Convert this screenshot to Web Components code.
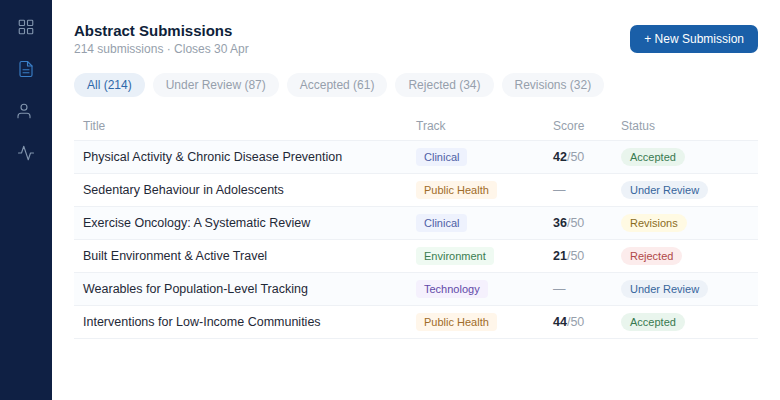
<!DOCTYPE html>
<html>
<head>
<meta charset="utf-8">
<title>Abstract Submissions</title>
<style>
html,body{margin:0;height:100%;background:#fff;}
body{font-family:"Liberation Sans",Arial,sans-serif;}
</style>
</head>
<body>
<app-shell>
  <side-nav slot="nav"></side-nav>
  <page-head title-text="Abstract Submissions" sub-text="214 submissions · Closes 30 Apr" action="+ New Submission"></page-head>
  <filter-tabs>
    <tab-pill active>All (214)</tab-pill>
    <tab-pill>Under Review (87)</tab-pill>
    <tab-pill>Accepted (61)</tab-pill>
    <tab-pill>Rejected (34)</tab-pill>
    <tab-pill>Revisions (32)</tab-pill>
  </filter-tabs>
  <sub-table>
    <sub-row head><span>Title</span><span>Track</span><span>Score</span><span>Status</span></sub-row>
    <sub-row tint><span>Physical Activity &amp; Chronic Disease Prevention</span><tag-chip kind="clinical">Clinical</tag-chip><score-cell value="42"></score-cell><tag-chip kind="accepted" round>Accepted</tag-chip></sub-row>
    <sub-row><span>Sedentary Behaviour in Adolescents</span><tag-chip kind="health">Public Health</tag-chip><score-cell></score-cell><tag-chip kind="review" round>Under Review</tag-chip></sub-row>
    <sub-row tint><span>Exercise Oncology: A Systematic Review</span><tag-chip kind="clinical">Clinical</tag-chip><score-cell value="36"></score-cell><tag-chip kind="revisions" round>Revisions</tag-chip></sub-row>
    <sub-row><span>Built Environment &amp; Active Travel</span><tag-chip kind="environment">Environment</tag-chip><score-cell value="21"></score-cell><tag-chip kind="rejected" round>Rejected</tag-chip></sub-row>
    <sub-row tint><span>Wearables for Population-Level Tracking</span><tag-chip kind="technology">Technology</tag-chip><score-cell></score-cell><tag-chip kind="review" round>Under Review</tag-chip></sub-row>
    <sub-row><span>Interventions for Low-Income Communities</span><tag-chip kind="health">Public Health</tag-chip><score-cell value="44"></score-cell><tag-chip kind="accepted" round>Accepted</tag-chip></sub-row>
  </sub-table>
</app-shell>

<script>
class AppShell extends HTMLElement{
  constructor(){
    super();
    this.attachShadow({mode:"open"}).innerHTML = `
    <style>
    :host{display:flex;height:100vh;min-height:400px;overflow:hidden;}
    main{flex:1;min-width:0;padding:22px 22px 0;box-sizing:border-box;}
    </style>
    <slot name="nav"></slot>
    <main><slot></slot></main>`;
  }
}
customElements.define("app-shell",AppShell);

class SideNav extends HTMLElement{
  constructor(){
    super();
    this.attachShadow({mode:"open"}).innerHTML = `
    <style>
    :host{display:flex;flex-direction:column;align-items:center;width:52px;flex:none;background:#0f2044;padding-top:18px;box-sizing:border-box;gap:24px;}
    svg{display:block;width:18px;height:18px;fill:none;stroke:#8295ae;stroke-width:1.5;stroke-linecap:round;stroke-linejoin:round;}
    svg.on{stroke:#3a7fc8;}
    svg.who{transform:translateX(-2px);}
    </style>
    <svg viewBox="0 0 24 24"><rect x="3" y="3" width="7" height="7" rx="1"/><rect x="14" y="3" width="7" height="7" rx="1"/><rect x="3" y="14" width="7" height="7" rx="1"/><rect x="14" y="14" width="7" height="7" rx="1"/></svg>
    <svg class="on" viewBox="0 0 24 24"><path d="M14 2H6a2 2 0 0 0-2 2v16a2 2 0 0 0 2 2h12a2 2 0 0 0 2-2V8z"/><path d="M14 2v6h6"/><path d="M8 13h8M8 17h8"/></svg>
    <svg class="who" viewBox="0 0 24 24"><path d="M20 21v-2a4 4 0 0 0-4-4H8a4 4 0 0 0-4 4v2"/><circle cx="12" cy="7" r="4"/></svg>
    <svg viewBox="0 0 24 24"><path d="M22 12h-4l-3 9L9 3l-3 9H2"/></svg>`;
  }
}
customElements.define("side-nav",SideNav);

class PageHead extends HTMLElement{
  connectedCallback(){
    if(this.shadowRoot) return;
    this.attachShadow({mode:"open"}).innerHTML = `
    <style>
    :host{display:flex;justify-content:space-between;align-items:flex-start;margin-bottom:16px;}
    h1{margin:0;font-size:15px;line-height:18px;font-weight:700;color:#0f1f3a;}
    p{margin:2px 0 0;font-size:12px;line-height:15px;color:#969fac;}
    button{margin:3px 0 0;height:28px;padding:0 14px;border:0;border-radius:7px;background:#1a5fa8;color:#fff;font:12px "Liberation Sans",Arial,sans-serif;}
    </style>
    <div><h1>${this.getAttribute("title-text")}</h1><p>${this.getAttribute("sub-text")}</p></div>
    <button>${this.getAttribute("action")}</button>`;
  }
}
customElements.define("page-head",PageHead);

class FilterTabs extends HTMLElement{
  constructor(){
    super();
    this.attachShadow({mode:"open"}).innerHTML = `
    <style>:host{display:flex;gap:8px;margin-bottom:10px;}</style><slot></slot>`;
  }
}
customElements.define("filter-tabs",FilterTabs);

class TabPill extends HTMLElement{
  constructor(){
    super();
    this.attachShadow({mode:"open"}).innerHTML = `
    <style>
    :host{display:block;height:24px;line-height:24px;padding:0 13px;border-radius:12px;font-size:12px;background:#f5f7fa;color:#969fac;}
    :host([active]){background:#e9f0f8;color:#2f68a8;}
    </style><slot></slot>`;
  }
}
customElements.define("tab-pill",TabPill);

class SubTable extends HTMLElement{
  constructor(){
    super();
    this.attachShadow({mode:"open"}).innerHTML = `<style>:host{display:block;}</style><slot></slot>`;
  }
}
customElements.define("sub-table",SubTable);

class SubRow extends HTMLElement{
  constructor(){
    super();
    this.attachShadow({mode:"open"}).innerHTML = `
    <style>
    :host{display:grid;grid-template-columns:333px 137px 68px 146px;align-items:center;height:33px;box-sizing:border-box;border-bottom:1px solid #eef1f5;font-size:12.5px;color:#1f2937;}
    :host([tint]){background:#fafcfe;}
    :host([head]){height:34px;align-items:end;padding-bottom:7px;font-size:12px;color:#969fac;}
    ::slotted(*){margin-left:9px;justify-self:start;}
    </style><slot></slot>`;
  }
}
customElements.define("sub-row",SubRow);

class TagChip extends HTMLElement{
  constructor(){
    super();
    this.attachShadow({mode:"open"}).innerHTML = `
    <style>
    :host{display:block;height:18px;line-height:18px;padding:0 8px;font-size:11px;border-radius:4px;}
    :host([round]){border-radius:9px;padding:0 9px;}
    :host([kind=clinical]){background:#eef2fd;color:#4f5fa5;}
    :host([kind=health]){background:#fff6ea;color:#a06c28;}
    :host([kind=environment]){background:#effaf2;color:#3a7d50;}
    :host([kind=technology]){background:#f5f1fd;color:#6149a8;}
    :host([kind=accepted]){background:#e9f5ed;color:#387a50;}
    :host([kind=review]){background:#edf2f8;color:#36659c;}
    :host([kind=revisions]){background:#fffae3;color:#8a6c1e;}
    :host([kind=rejected]){background:#fcecec;color:#b04848;}
    </style><slot></slot>`;
  }
}
customElements.define("tag-chip",TagChip);

class ScoreCell extends HTMLElement{
  connectedCallback(){
    if(this.shadowRoot) return;
    let v = this.getAttribute("value");
    this.attachShadow({mode:"open"}).innerHTML = `
    <style>
    :host{display:block;font-size:12.5px;color:#969fac;}
    b{color:#1f2937;}
    </style>${v ? `<b>${v}</b>/50` : "—"}`;
  }
}
customElements.define("score-cell",ScoreCell);
</script>
</body>
</html>
